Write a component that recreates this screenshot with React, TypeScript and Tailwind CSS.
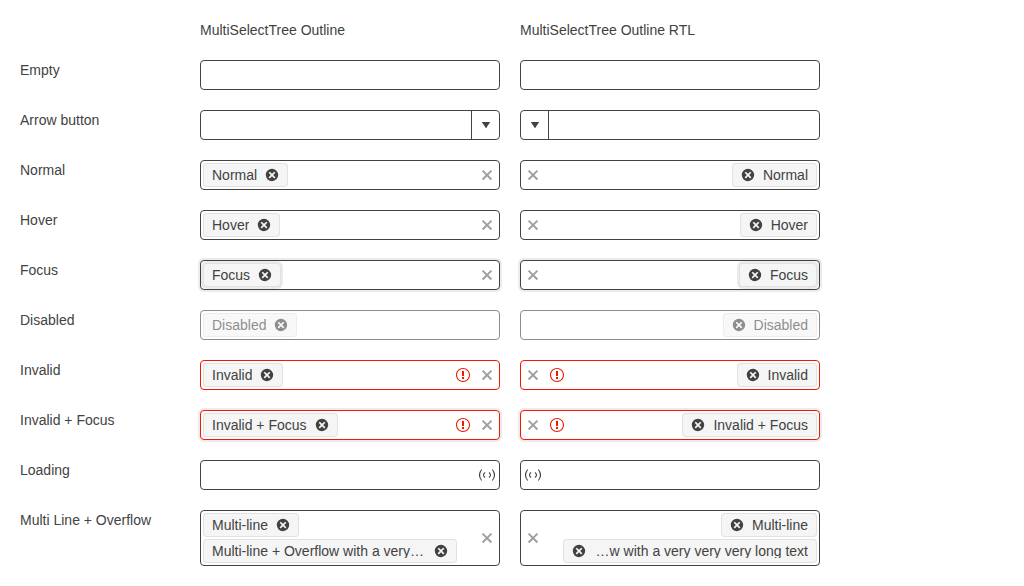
import { Fragment } from "react";
import type { ReactNode } from "react";

type Row = {
  id: string;
  label: string;
  chips?: string[];
  arrow?: boolean;
  clear?: boolean;
  focus?: boolean;
  chipFocus?: boolean;
  disabled?: boolean;
  invalid?: boolean;
  loading?: boolean;
};

const rows: Row[] = [
  { id: "empty", label: "Empty" },
  { id: "arrow", label: "Arrow button", arrow: true },
  { id: "normal", label: "Normal", chips: ["Normal"], clear: true },
  { id: "hover", label: "Hover", chips: ["Hover"], clear: true },
  { id: "focus", label: "Focus", chips: ["Focus"], clear: true, focus: true, chipFocus: true },
  { id: "disabled", label: "Disabled", chips: ["Disabled"], disabled: true },
  { id: "invalid", label: "Invalid", chips: ["Invalid"], clear: true, invalid: true },
  { id: "invalid-focus", label: "Invalid + Focus", chips: ["Invalid + Focus"], clear: true, invalid: true, focus: true },
  { id: "loading", label: "Loading", loading: true },
  {
    id: "multi",
    label: "Multi Line + Overflow",
    chips: ["Multi-line", "Multi-line + Overflow with a very very very long text"],
    clear: true,
  },
];

function Icon({ children }: { children: ReactNode }) {
  return (
    <svg viewBox="0 0 512 512" className="block size-4 shrink-0 fill-current" aria-hidden="true">
      {children}
    </svg>
  );
}

const CloseIcon = () => (
  <Icon>
    <path d="M420 136 300 256 420 376 376 420 256 300 136 420 92 376 212 256 92 136 136 92 256 212 376 92z" />
  </Icon>
);

const CloseCircleIcon = () => (
  <Icon>
    <path
      fillRule="evenodd"
      d="M256 58a198 198 0 1 0 0 396 198 198 0 0 0 0-396M364 326 326 364 256 294 186 364 148 326 218 256 148 186 186 148 256 218 326 148 364 186 294 256z"
    />
  </Icon>
);

const CaretIcon = () => (
  <Icon>
    <path d="M256 356 120 160h272z" />
  </Icon>
);

const WarningIcon = () => (
  <Icon>
    <path d="M256 32C132 32 32 132 32 256s100 224 224 224 224-100 224-224S380 32 256 32m0 414c-105 0-190-85-190-190S151 66 256 66s190 85 190 190-85 190-190 190m32-62h-64v-64h64zm0-96h-64V128h64z" />
  </Icon>
);

const LoadingIcon = () => (
  <svg
    viewBox="0 0 16 16"
    className="block size-4 fill-none stroke-current"
    strokeWidth="1.1"
    role="img"
    aria-label="Loading"
  >
    <path d="M2.7 2.5Q-1.7 8 2.7 13.5M13.3 2.5Q17.7 8 13.3 13.5M6 5.5Q3 8 6 10.5M10 5.5Q13 8 10 10.5" />
  </svg>
);

function Chip({ text, focus, disabled }: { text: string; focus?: boolean; disabled?: boolean }) {
  return (
    <span
      className={`flex h-6 max-w-[calc(100%-16px)] items-center gap-[7px] rounded border border-black/8 bg-[#f5f5f5] ps-2 pe-[7px] ${
        focus ? "shadow-[0_0_0_2px_rgba(0,0,0,0.08)]" : ""
      }`}
    >
      <span className="min-w-0 truncate leading-[14px]">{text}</span>
      <button type="button" disabled={disabled} aria-label={`Remove ${text}`} className="shrink-0">
        <CloseCircleIcon />
      </button>
    </span>
  );
}

function Field({ row, rtl }: { row: Row; rtl?: boolean }) {
  const border = row.invalid ? "border-[#f31700]" : "border-[#424242]";
  const ring = row.focus ? "shadow-[0_0_0_2px_rgba(0,0,0,0.08)]" : "";
  const fade = row.disabled ? "opacity-60" : "";
  return (
    <div dir={rtl ? "rtl" : "ltr"} className={`flex min-w-0 items-stretch rounded border bg-white ${border} ${ring} ${fade}`}>
      <div className="flex min-h-7 min-w-0 flex-1 flex-wrap gap-0.5 p-0.5">
        {row.chips?.map((text) => (
          <Chip key={text} text={text} focus={row.chipFocus} disabled={row.disabled} />
        ))}
        <input
          id={rtl ? `${row.id}-rtl` : row.id}
          aria-label={rtl ? `${row.label} RTL` : undefined}
          type="text"
          disabled={row.disabled}
          aria-invalid={row.invalid}
          className="h-6 w-0 min-w-0 flex-1 bg-transparent outline-none"
        />
      </div>
      {row.invalid && (
        <span className="me-1 flex items-center text-[#f31700]">
          <WarningIcon />
        </span>
      )}
      {row.clear && (
        <button type="button" aria-label="Clear" className="flex w-6 shrink-0 items-center justify-center opacity-50">
          <CloseIcon />
        </button>
      )}
      {row.loading && (
        <span className="flex w-6 shrink-0 items-center justify-center">
          <LoadingIcon />
        </span>
      )}
      {row.arrow && (
        <button
          type="button"
          aria-label="Open list"
          className="flex shrink-0 items-center border-s border-[#424242] pr-[5px] pl-1.5"
        >
          <CaretIcon />
        </button>
      )}
    </div>
  );
}

export default function App() {
  return (
    <main className="grid grid-cols-[160px_minmax(0,300px)_minmax(0,300px)] gap-5 bg-white p-5 font-['Liberation_Sans',Arial,sans-serif] text-sm leading-5 text-[#424242]">
      <span />
      <h2>MultiSelectTree Outline</h2>
      <h2>MultiSelectTree Outline RTL</h2>
      {rows.map((row) => (
        <Fragment key={row.id}>
          <label htmlFor={row.id} className="self-start">
            {row.label}
          </label>
          <Field row={row} />
          <Field row={row} rtl />
        </Fragment>
      ))}
    </main>
  );
}
